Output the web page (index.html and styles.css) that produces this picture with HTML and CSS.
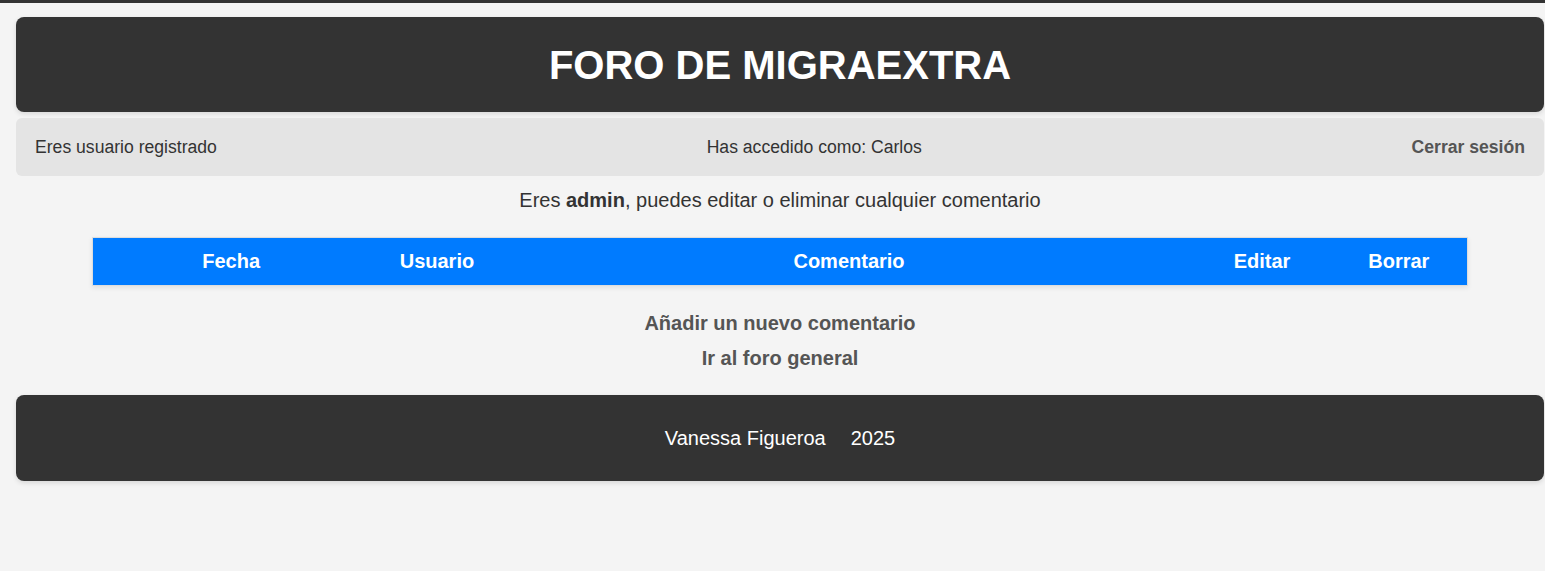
FILE: index.html
```html
<!DOCTYPE html>
<html lang="es">
<head>
<meta charset="utf-8">
<title>Foro de MigraExtra</title>
<link rel="stylesheet" href="styles.css">
</head>
<body>
<div class="page">
  <header class="site-header">
    <h1 class="site-title">FORO DE MIGRAEXTRA</h1>
  </header>
  <nav class="user-bar">
    <span class="user-status">Eres usuario registrado</span>
    <span class="user-name">Has accedido como: Carlos</span>
    <a class="logout" href="#">Cerrar sesión</a>
  </nav>
  <p class="role-note">Eres <strong>admin</strong>, puedes editar o eliminar cualquier comentario</p>
  <table class="comments">
    <thead>
      <tr>
        <th class="col-date">Fecha</th>
        <th class="col-user">Usuario</th>
        <th class="col-comment">Comentario</th>
        <th class="col-edit">Editar</th>
        <th class="col-del">Borrar</th>
      </tr>
    </thead>
    <tbody></tbody>
  </table>
  <div class="actions">
    <a class="action-link" href="#">Añadir un nuevo comentario</a>
    <a class="action-link" href="#">Ir al foro general</a>
  </div>
  <footer class="site-footer">
    <span>Vanessa Figueroa</span>
    <span>2025</span>
  </footer>
</div>
</body>
</html>
```
FILE: styles.css
```css
* { box-sizing: border-box; }

html, body {
  margin: 0;
  padding: 0;
}

body {
  background: #f4f4f4;
  border-top: 3px solid #333;
  font-family: "Liberation Sans", Arial, sans-serif;
  color: #333;
  min-height: 571px;
}

.page {
  padding: 14px 1px 0 16px;
  display: flex;
  flex-direction: column;
}

.site-header {
  background: #333;
  border-radius: 8px;
  height: 95px;
  display: flex;
  align-items: center;
  justify-content: center;
  box-shadow: 0 2px 5px rgba(0, 0, 0, 0.12);
}

.site-title {
  margin: 0;
  color: #fff;
  font-size: 40px;
  font-weight: bold;
  line-height: 46px;
}

.user-bar {
  margin-top: 6px;
  height: 58px;
  background: #e4e4e4;
  border-radius: 6px;
  display: flex;
  align-items: center;
  justify-content: space-between;
  padding: 0 19px;
  font-size: 17.6px;
  color: #333;
  line-height: 20px;
}

.logout {
  font-weight: bold;
  color: #555;
  text-decoration: none;
}

.role-note {
  margin: 13px 0 0;
  text-align: center;
  font-size: 20px;
  line-height: 23px;
  color: #333;
}

.comments {
  margin: 25px auto 0;
  width: 90%;
  border-collapse: collapse;
  border: 1px solid #ddd;
  box-shadow: 0 2px 5px rgba(0, 0, 0, 0.08);
}

.comments th {
  background: #007bff;
  color: #fff;
  font-size: 20px;
  font-weight: bold;
  height: 48px;
  padding: 0 12px;
  text-align: center;
}

.col-date { width: 276px; }
.col-user { width: 136px; }
.col-comment { width: 688px; }
.col-edit { width: 138px; }
.col-del { width: 136px; }

.actions {
  margin-top: 26px;
  display: flex;
  flex-direction: column;
  align-items: center;
  gap: 12px;
}

.action-link {
  font-size: 20px;
  line-height: 23px;
  font-weight: bold;
  color: #555;
  text-decoration: none;
}

.site-footer {
  margin-top: 25px;
  height: 86px;
  background: #333;
  border-radius: 8px;
  color: #fff;
  font-size: 20px;
  display: flex;
  align-items: center;
  justify-content: center;
  gap: 25px;
  box-shadow: 0 2px 5px rgba(0, 0, 0, 0.12);
}
```
